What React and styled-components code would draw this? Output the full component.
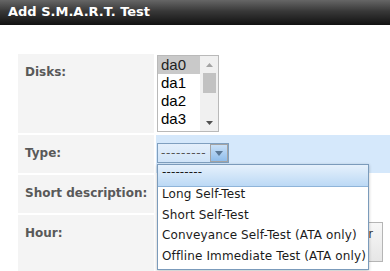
import React from "react";
import styled, { createGlobalStyle } from "styled-components";

const Global = createGlobalStyle`
  html, body { margin: 0; padding: 0; background: #fff; }
  body { font-family: "DejaVu Sans", Verdana, sans-serif; overflow: hidden; }
`;

const Page = styled.div`
  position: relative;
  width: 390px;
  height: 271px;
  overflow: hidden;
`;

const TitleBar = styled.div`
  height: 25px;
  box-sizing: border-box;
  padding: 4px 0 0 8px;
  background: linear-gradient(#666 0%, #383838 45%, #121212 100%);
  color: #fff;
  font-family: "DejaVu Sans", Verdana, sans-serif;
  font-size: 13px;
  font-weight: 700;
  line-height: 16px;
  white-space: nowrap;
`;

const Form = styled.div`
  display: grid;
  grid-template-columns: 136px 1fr;
  column-gap: 2px;
  row-gap: 2px;
  padding: 29px 0 0 18px;
  width: 420px;
`;

const Label = styled.div`
  background: #f4f4f4;
  height: ${(p) => p.h}px;
  box-sizing: border-box;
  padding: 11px 0 0 7px;
  font: bold 12px "DejaVu Sans", Verdana, sans-serif;
  color: #595959;
`;

const Value = styled.div`
  background: ${(p) => (p.active ? "#d5e8fb" : "#fff")};
  padding: ${(p) => p.pad || "1px 0 0 1px"};
  box-sizing: border-box;
  height: ${(p) => p.h}px;
  position: relative;
`;

const ListBox = styled.div`
  display: flex;
  width: 62px;
  height: 77px;
  box-sizing: border-box;
  border: 1px solid #b9b9b9;
  background: #fff;
`;

const Items = styled.div`
  flex: 1;
  display: flex;
  flex-direction: column;
`;

const Item = styled.div`
  height: 18px;
  padding-left: 3px;
  font: 15px "Liberation Sans", Arial, sans-serif;
  line-height: 18px;
  background: ${(p) => (p.selected ? "#c9c9c9" : "transparent")};
  color: ${(p) => (p.selected ? "#222" : "#000")};
`;

const Scroll = styled.div`
  width: 17px;
  background: #f0f0f0;
  display: flex;
  flex-direction: column;
  align-items: center;
  border-left: 1px solid #f0f0f0;
`;

const Arrow = styled.div`
  height: 17px;
  display: flex;
  align-items: center;
  justify-content: center;
`;

const Thumb = styled.div`
  width: 13px;
  height: 20px;
  background: #c2c2c2;
`;

const Spacer = styled.div`
  flex: 1;
`;

const SelectBox = styled.div`
  display: flex;
  width: 72px;
  height: 20px;
  box-sizing: border-box;
  border: 1px solid #7f9fbf;
  background: linear-gradient(#e4effb, #d0e4f8);
`;

const SelectText = styled.div`
  flex: 1;
  padding-left: 3px;
  font: 12px "DejaVu Sans", Verdana, sans-serif;
  line-height: 18px;
  color: #555;
  letter-spacing: 0.7px;
`;

const SelectBtn = styled.div`
  width: 18px;
  height: 18px;
  box-sizing: border-box;
  border: 1px solid #a3a3a3;
  background: linear-gradient(#c9e0f7, #8fbdeb);
  display: flex;
  align-items: center;
  justify-content: center;
`;

const Menu = styled.div`
  position: absolute;
  left: 157px;
  top: 164px;
  width: 212px;
  box-sizing: border-box;
  border: 1px solid #7b9bbb;
  background: #fff;
  box-shadow: 0 1px 3px rgba(0, 0, 0, 0.25);
  z-index: 5;
`;

const Option = styled.div`
  height: ${(p) => (p.first ? 21 : 20.5)}px;
  line-height: ${(p) => (p.first ? 21 : 20.5)}px;
  padding-left: 4px;
  font: 12px "DejaVu Sans", Verdana, sans-serif;
  color: #1b1b1b;
  letter-spacing: 0.13px;
  white-space: nowrap;
  background: ${(p) =>
    p.first ? "linear-gradient(#e6f1fc, #bcd9f5)" : "transparent"};
  border-bottom: ${(p) => (p.first ? "1px solid #8fb4d9" : "none")};
`;

const Tabs = styled.div`
  display: flex;
  gap: 2px;
  padding-top: 7px;
`;

const Tab = styled.div`
  padding: 4px 8.5px;
  height: 40px;
  box-sizing: border-box;
  border: 1px solid #b5b5b5;
  background: linear-gradient(#f7f7f7, #e6e6e6);
  font: 12px "DejaVu Sans Condensed", Tahoma, sans-serif;
  color: #333;
  white-space: nowrap;
  letter-spacing: 0.4px;
`;

export default function App() {
  return (
    <Page>
      <Global />
      <TitleBar>Add S.M.A.R.T. Test</TitleBar>
      <Form>
        <Label h={79}>Disks:</Label>
        <Value h={79}>
          <ListBox>
            <Items>
              <Item selected>da0</Item>
              <Item>da1</Item>
              <Item>da2</Item>
              <Item>da3</Item>
            </Items>
            <Scroll>
              <Arrow>
                <svg width="7" height="4" viewBox="0 0 7 4">
                  <path d="M0 4 L3.5 0 L7 4 Z" fill="#a3a3a3" />
                </svg>
              </Arrow>
              <Thumb />
              <Spacer />
              <Arrow>
                <svg width="7" height="4" viewBox="0 0 7 4">
                  <path d="M0 0 L3.5 4 L7 0 Z" fill="#505050" />
                </svg>
              </Arrow>
            </Scroll>
          </ListBox>
        </Value>
        <Label h={38}>Type:</Label>
        <Value h={38} active pad="8px 0 0 1px">
          <SelectBox>
            <SelectText>---------</SelectText>
            <SelectBtn>
              <svg width="8" height="5" viewBox="0 0 8 5">
                <path d="M0 0 L8 0 L4 5 Z" fill="#5a7896" />
              </svg>
            </SelectBtn>
          </SelectBox>
        </Value>
        <Label h={38}>Short description:</Label>
        <Value h={38} />
        <Label h={60}>Hour:</Label>
        <Value h={60} pad="0 0 0 1px">
          <Tabs>
            <Tab>Every N hour</Tab>
            <Tab>Each selected hour</Tab>
          </Tabs>
        </Value>
      </Form>
      <Menu>
        <Option first>---------</Option>
        <Option>Long Self-Test</Option>
        <Option>Short Self-Test</Option>
        <Option>Conveyance Self-Test (ATA only)</Option>
        <Option>Offline Immediate Test (ATA only)</Option>
      </Menu>
    </Page>
  );
}
